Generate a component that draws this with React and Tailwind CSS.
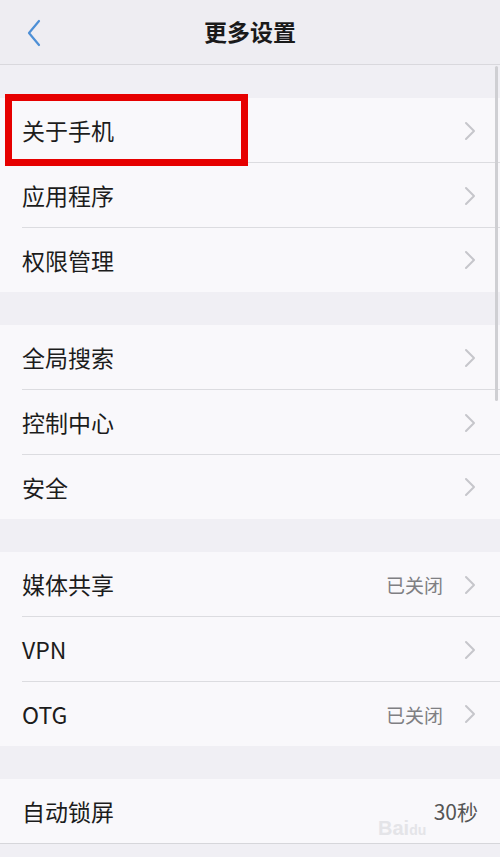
import React from "react";

const font = { fontFamily: '"Noto Sans CJK SC", "Noto Sans", sans-serif' };

function Chevron() {
  return (
    <svg width="12" height="20" viewBox="0 0 12 20" className="shrink-0">
      <path d="M2 2 L10 10 L2 18" fill="none" stroke="#c6c6cb" strokeWidth="2" strokeLinecap="round" strokeLinejoin="round" />
    </svg>
  );
}

function Row({ label, value, last, arrow = true }) {
  return (
    <div className={`relative flex items-center pl-[22px] pr-[24px] bg-[#f9f8fb] ${last ? "h-[64px]" : "h-[65px]"}`}>
      <span className="text-[23px] text-[#1c1c1c] leading-none">{label}</span>
      <div className="ml-auto flex items-center gap-[21px]">
        {value && <span className="text-[19px] text-[#7f7f83] leading-none">{value}</span>}
        {arrow && <Chevron />}
      </div>
      {!last && <div className="absolute left-[22px] right-0 bottom-0 h-px bg-[#dcdce0]" />}
    </div>
  );
}

function Group({ children }) {
  return <div className="flex flex-col">{children}</div>;
}

export default function App() {
  return (
    <div className="relative w-[500px] h-[857px] overflow-hidden bg-[#f0eff4]" style={font}>
      <div className="relative h-[65px] flex items-center justify-center bg-[#eeedf2] border-b border-[#d9d8dd]">
        <svg width="16" height="28" viewBox="0 0 16 28" className="absolute left-[26px] top-[19px]">
          <path d="M13 2 L3 14 L13 26" fill="none" stroke="#4d8fd6" strokeWidth="2.2" strokeLinecap="round" strokeLinejoin="round" />
        </svg>
        <span className="text-[23px] font-bold text-[#1a1a1a] leading-none -mt-[2px]">更多设置</span>
      </div>
      <div className="flex flex-col gap-[33px] pt-[33px]">
        <Group>
          <Row label="关于手机" />
          <Row label="应用程序" />
          <Row label="权限管理" last />
        </Group>
        <Group>
          <Row label="全局搜索" />
          <Row label="控制中心" />
          <Row label="安全" last />
        </Group>
        <Group>
          <Row label="媒体共享" value="已关闭" />
          <Row label="VPN" />
          <Row label="OTG" value="已关闭" last />
        </Group>
        <Group>
          <div className="relative h-[65px] flex items-center pl-[22px] pr-[22px] bg-[#f9f8fb] border-b border-[#d6d6da]">
            <span className="text-[23px] text-[#1c1c1c] leading-none">自动锁屏</span>
            <span className="ml-auto text-[21px] text-[#555] leading-none">30秒</span>
          </div>
        </Group>
      </div>
      {/* red highlight box */}
      <div className="absolute left-[5px] top-[94px] w-[243px] h-[72px] border-[7px] border-[#e60000]" />
      {/* scrollbar */}
      <div className="absolute right-[2px] top-[66px] w-[3px] h-[335px] bg-[#cfcfd3] rounded-full" />
      {/* watermark */}
      <div className="absolute left-[378px] top-[818px] text-[20px] font-bold text-[#e4e4e8] leading-none" style={{ fontFamily: '"Liberation Sans", sans-serif' }}>
        Bai<span className="text-[14px]">du</span>
      </div>
    </div>
  );
}
